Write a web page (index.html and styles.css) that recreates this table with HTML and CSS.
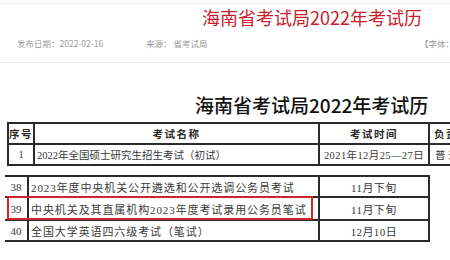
FILE: index.html
```html
<!DOCTYPE html>
<html lang="zh-CN">
<head>
<meta charset="utf-8">
<title>海南省考试局2022年考试历</title>
<link rel="stylesheet" href="styles.css">
</head>
<body>
<header class="site-header">
  <h1 class="page-title">海南省考试局2022年考试历</h1>
  <div class="meta">
    <span class="meta-date">发布日期：2022-02-16</span>
    <span class="meta-source">来源： 省考试局</span>
    <span class="meta-font">【字体：</span>
  </div>
</header>
<section class="snapshot">
  <h2 class="doc-title">海南省考试局2022年考试历</h2>
  <table class="exam-table t1">
    <colgroup><col class="c-no"><col class="c-name"><col class="c-time"><col class="c-org"></colgroup>
    <thead>
      <tr><th>序号</th><th>考试名称</th><th>考试时间</th><th class="org">负责单位</th></tr>
    </thead>
    <tbody>
      <tr><td class="no">1</td><td class="name">2022年全国硕士研究生招生考试（初试）</td><td class="time">2021年12月25—27日</td><td class="org">普通高校</td></tr>
    </tbody>
  </table>
  <div class="t2-wrap">
    <table class="exam-table t2">
      <colgroup><col class="c-no"><col class="c-name"><col class="c-time"></colgroup>
      <tbody>
        <tr class="r38"><td class="no">38</td><td class="name">2023年度中央机关公开遴选和公开选调公务员考试</td><td class="time">11月下旬</td></tr>
        <tr class="r39"><td class="no">39</td><td class="name">中央机关及其直属机构2023年度考试录用公务员笔试</td><td class="time">11月下旬</td></tr>
        <tr class="r40"><td class="no">40</td><td class="name">全国大学英语四六级考试（笔试）</td><td class="time">12月10日</td></tr>
      </tbody>
    </table>
    <div class="highlight"></div>
  </div>
</section>
</body>
</html>
```
FILE: styles.css
```css
html, body {
  margin: 0;
  padding: 0;
}
body {
  width: 450px;
  height: 260px;
  overflow: hidden;
  background: #fff;
  font-family: "Noto Sans CJK SC", sans-serif;
}
.site-header {
  margin-top: 3px;
  border-top: 1px solid #ececec;
  border-bottom: 1px solid #efefef;
  padding-bottom: 12px;
}
.page-title {
  margin: 0;
  padding-left: 202px;
  font-size: 18px;
  line-height: 26px;
  font-weight: 400;
  color: #c9202c;
  white-space: nowrap;
}
.meta {
  display: flex;
  margin-top: 6px;
  height: 14px;
  line-height: 14px;
  font-size: 8.5px;
  color: #9a9a9a;
  white-space: nowrap;
}
.meta-date {
  margin-left: 17px;
  width: 129px;
  flex: none;
}
.meta-source {
  width: 274px;
  flex: none;
}
.meta-font {
  flex: none;
}
.snapshot {
  padding-top: 30px;
}
.doc-title {
  margin: 0;
  padding-left: 195px;
  font-size: 19px;
  line-height: 24px;
  font-weight: 500;
  color: #111;
  white-space: nowrap;
}
.exam-table {
  border-collapse: collapse;
  table-layout: fixed;
  font-family: "Liberation Serif", "Noto Sans CJK SC", serif;
  color: #3a3a3a;
  white-space: nowrap;
}
.exam-table th,
.exam-table td {
  border: 2px solid #2b2b2b;
  padding: 0;
  overflow: hidden;
  vertical-align: middle;
}
.t1 {
  margin-left: 7px;
  margin-top: 5px;
  width: 520px;
  font-size: 10.5px;
}
.t1 .c-no { width: 26px; }
.t1 .c-name { width: 285px; }
.t1 .c-time { width: 110px; }
.t1 .c-org { width: 99px; }
.t1 th {
  height: 19px;
  font-weight: 700;
  color: #2a2a2a;
  text-align: center;
  letter-spacing: 1.5px;
}
.t1 th.org { text-align: left; padding-left: 4px; }
.t1 td { height: 19px; }
.no { text-align: center; }
.time { text-align: center; letter-spacing: 0.4px; }
.name { text-align: left; padding-left: 2px !important; }
.t1 td.org { text-align: left; padding-left: 5px; letter-spacing: 3px; }
.t2-wrap {
  position: relative;
  margin-top: 9px;
  margin-left: 5px;
  width: 425px;
}
.t2 {
  width: 425px;
  font-size: 11px;
}
.t2 .c-no { width: 23px; }
.t2 .c-name { width: 290px; }
.t2 .c-time { width: 110px; }
.t2 td { height: 19px; }
.t2 tr.r39 td { height: 21px; }
.t2 td.no { border-left: none; }
.t2 td.name { letter-spacing: 0.9px; }
.highlight {
  position: absolute;
  left: 2px;
  top: 21px;
  width: 302px;
  height: 20px;
  border: 2px solid #d0232b;
}
```
